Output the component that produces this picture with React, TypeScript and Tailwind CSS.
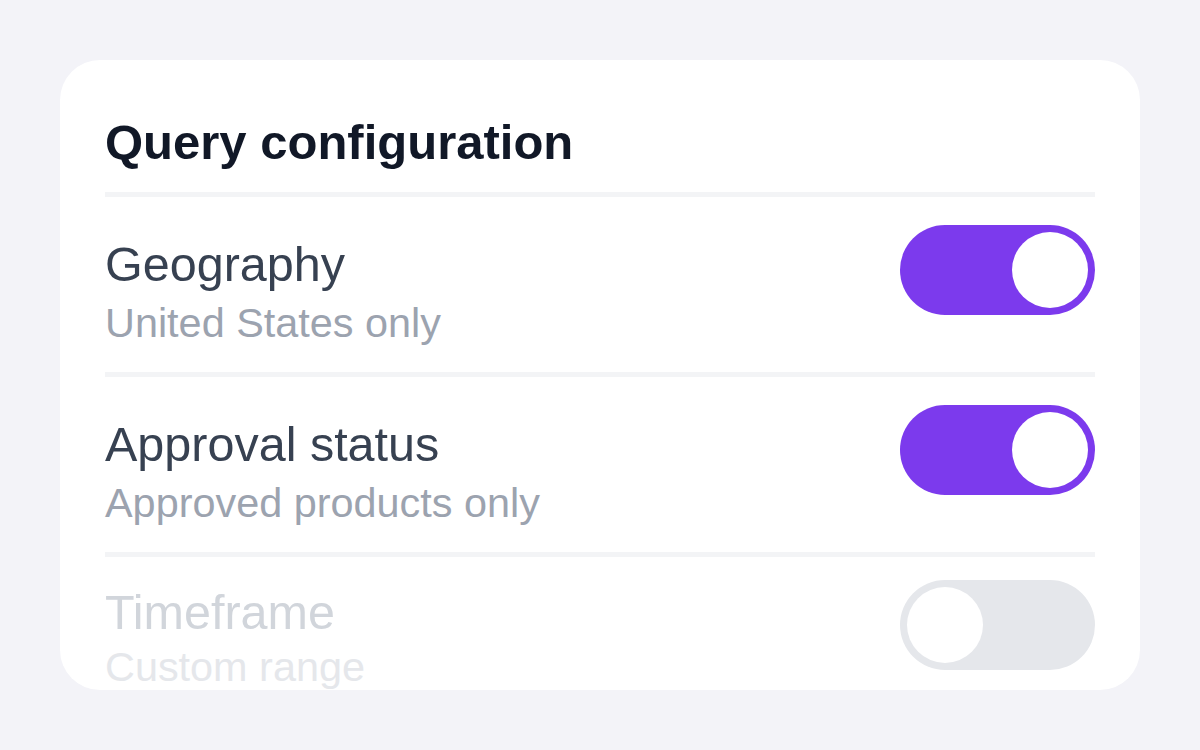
const rows = [
  { title: "Geography", detail: "United States only", on: true, muted: false },
  { title: "Approval status", detail: "Approved products only", on: true, muted: false },
  { title: "Timeframe", detail: "Custom range", on: false, muted: true },
];

function Toggle({ on }: { on: boolean }) {
  return (
    <div
      className={
        on
          ? "flex h-[90px] w-[195px] shrink-0 items-center justify-end rounded-full bg-[#7c3aed] p-[7px]"
          : "flex h-[90px] w-[195px] shrink-0 items-center justify-start rounded-full bg-[#e5e7eb] p-[7px]"
      }
    >
      <div className="h-[76px] w-[76px] rounded-full bg-white" />
    </div>
  );
}

export default function App() {
  return (
    <div
      className="min-h-[750px] w-full bg-[#f3f3f8] p-[60px]"
      style={{ fontFamily: '"Liberation Sans", Arial, sans-serif' }}
    >
      <div className="h-[630px] overflow-hidden rounded-[40px] bg-white px-[45px] pt-[52px]">
        <h1 className="mb-5 text-[49px] leading-[60px] font-bold text-[#111827]">
          Query configuration
        </h1>

        {rows.map((row) => (
          <div key={row.title}>
            <div className="h-[5px] bg-[#f3f4f6]" />
            <div
              className={
                row.muted
                  ? "flex items-start justify-between pt-[23px] pb-[27px]"
                  : "flex items-start justify-between pt-[28px] pb-[27px]"
              }
            >
              <div className={row.muted ? "-mt-[5px]" : "mt-[2px]"}>
                <div
                  className={
                    row.muted
                      ? "text-[48.5px] leading-[75px] text-[#d1d5db]"
                      : "text-[48.5px] leading-[75px] text-[#374151]"
                  }
                >
                  {row.title}
                </div>
                <div
                  className={
                    row.muted
                      ? "-mt-[4px] text-[41.4px] leading-[43px] text-[#e5e7eb]"
                      : "text-[41.4px] leading-[43px] text-[#9ca3af]"
                  }
                >
                  {row.detail}
                </div>
              </div>
              <Toggle on={row.on} />
            </div>
          </div>
        ))}
      </div>
    </div>
  );
}
